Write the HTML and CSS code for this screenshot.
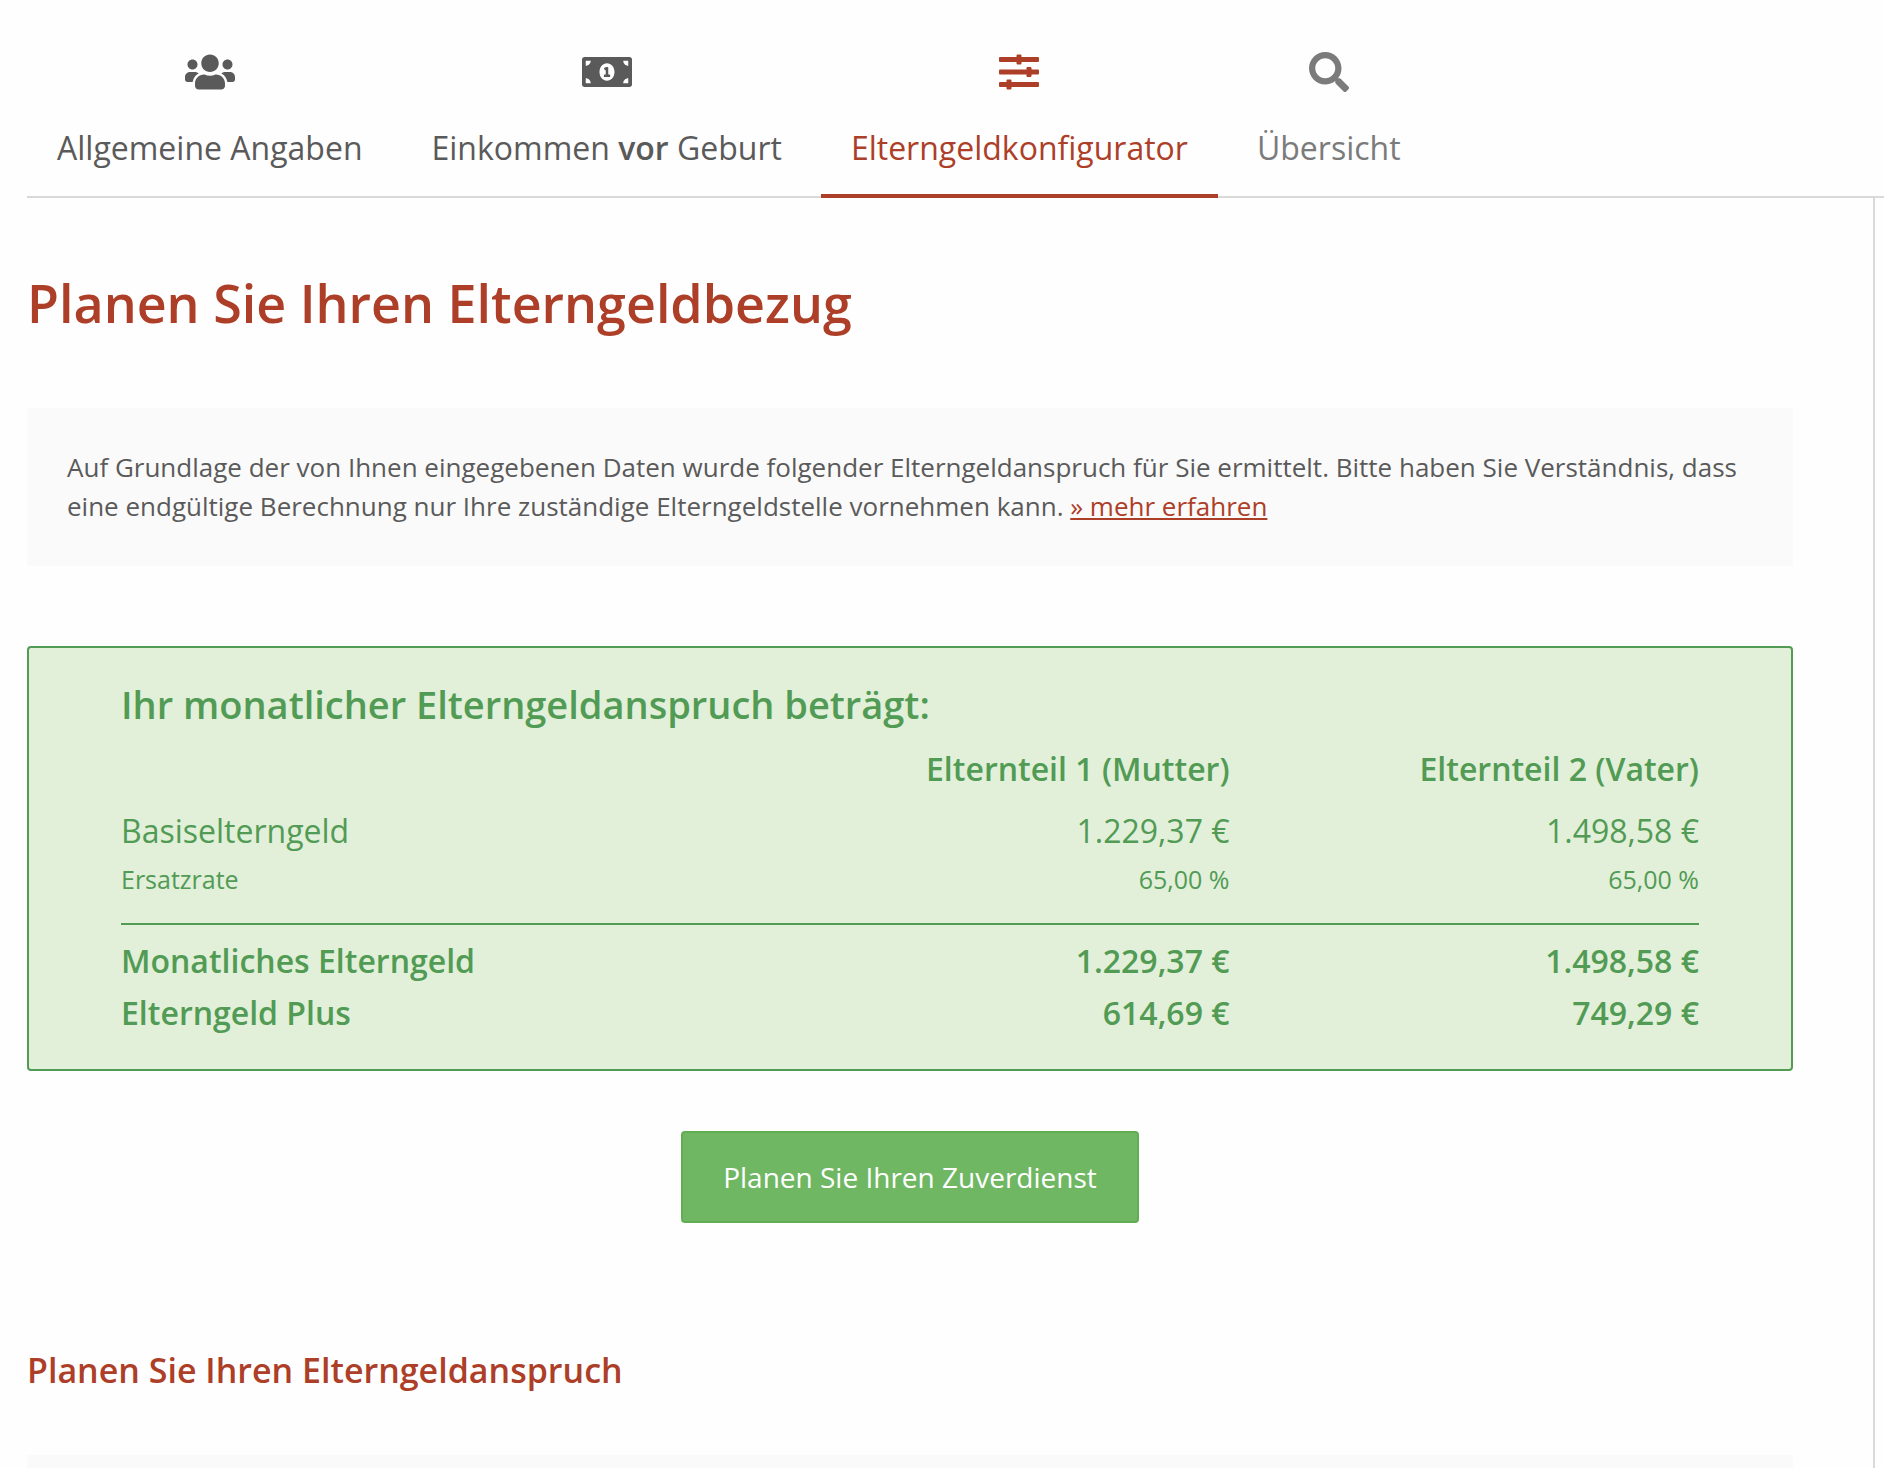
FILE: index.html
```html
<!DOCTYPE html>
<html lang="de">
<head>
<meta charset="utf-8">
<meta name="viewport" content="width=device-width, initial-scale=1">
<title>Elterngeldkonfigurator</title>
<link rel="stylesheet" href="styles.css">
</head>
<body>
<nav class="tabs" aria-label="Schritte">
  <a class="tab" href="#angaben">
    <svg class="icon" viewBox="0 0 640 512" aria-hidden="true"><path d="M96 224c35.300 0 64-28.700 64-64s-28.700-64-64-64-64 28.700-64 64 28.700 64 64 64zm448 0c35.300 0 64-28.700 64-64s-28.700-64-64-64-64 28.700-64 64 28.700 64 64 64zm32 32h-64c-17.600 0-33.500 7.100-45.100 18.600 40.300 22.100 68.900 62 75.100 109.400h66c17.700 0 32-14.300 32-32v-32c0-35.300-28.700-64-64-64zm-256 0c61.900 0 112-50.100 112-112S381.900 32 320 32 208 82.100 208 144s50.100 112 112 112zm76.800 32h-8.300c-20.800 10-43.900 16-68.500 16s-47.600-6-68.500-16h-8.300C179.600 288 128 339.600 128 403.200V432c0 26.500 21.500 48 48 48h288c26.500 0 48-21.500 48-48v-28.800c0-63.600-51.600-115.200-115.200-115.200zm-223.700-13.400C161.500 263.100 145.600 256 128 256H64c-35.300 0-64 28.700-64 64v32c0 17.700 14.300 32 32 32h65.900c6.300-47.400 34.900-87.300 75.200-109.400z"/></svg>
    <span>Allgemeine Angaben</span>
  </a>
  <a class="tab" href="#einkommen">
    <svg class="icon" viewBox="0 0 640 512" aria-hidden="true"><path fill-rule="evenodd" d="M608 64H32C14.330 64 0 78.330 0 96v320c0 17.670 14.330 32 32 32h576c17.670 0 32-14.330 32-32V96c0-17.670-14.330-32-32-32zM48 400v-64c35.350 0 64 28.650 64 64H48zm0-224v-64h64c0 35.350-28.650 64-64 64zm272 192c-53.020 0-96-50.150-96-112 0-61.860 42.980-112 96-112s96 50.140 96 112c0 61.870-43 112-96 112zm272 32h-64c0-35.350 28.650-64 64-64v64zm0-224c-35.350 0-64-28.650-64-64h64v64z"/><path d="M352 288h-16v-88c0-4.420-3.580-8-8-8h-13.580c-4.740 0-9.370 1.400-13.310 4.030l-15.330 10.220a7.994 7.994 0 0 0-2.220 11.090l8.880 13.310a7.994 7.994 0 0 0 11.090 2.220l.47-.31V288h-16c-4.420 0-8 3.580-8 8v16c0 4.420 3.580 8 8 8h64c4.420 0 8-3.580 8-8v-16c0-4.420-3.580-8-8-8z"/></svg>
    <span>Einkommen <strong>vor</strong> Geburt</span>
  </a>
  <a class="tab tab-active" href="#konfigurator" aria-current="step">
    <svg class="icon" viewBox="0 0 512 512" aria-hidden="true"><path d="M496 384H160v-16c0-8.800-7.200-16-16-16h-32c-8.800 0-16 7.200-16 16v16H16c-8.800 0-16 7.200-16 16v32c0 8.800 7.200 16 16 16h80v16c0 8.800 7.200 16 16 16h32c8.800 0 16-7.200 16-16v-16h336c8.800 0 16-7.200 16-16v-32c0-8.800-7.200-16-16-16zm0-160h-80v-16c0-8.800-7.200-16-16-16h-32c-8.800 0-16 7.200-16 16v16H16c-8.800 0-16 7.200-16 16v32c0 8.800 7.200 16 16 16h336v16c0 8.800 7.200 16 16 16h32c8.800 0 16-7.200 16-16v-16h80c8.800 0 16-7.200 16-16v-32c0-8.800-7.200-16-16-16zm0-160H288V48c0-8.800-7.200-16-16-16h-32c-8.800 0-16 7.200-16 16v16H16C7.200 64 0 71.200 0 80v32c0 8.800 7.200 16 16 16h208v16c0 8.800 7.200 16 16 16h32c8.800 0 16-7.200 16-16v-16h208c8.800 0 16-7.200 16-16V80c0-8.800-7.200-16-16-16z"/></svg>
    <span>Elterngeldkonfigurator</span>
  </a>
  <a class="tab tab-pending" href="#uebersicht">
    <svg class="icon" viewBox="0 0 512 512" aria-hidden="true"><path d="M505 442.700L405.300 343c-4.500-4.500-10.600-7-17-7H372c27.600-35.300 44-79.700 44-128C416 93.100 322.900 0 208 0S0 93.100 0 208s93.100 208 208 208c48.300 0 92.700-16.400 128-44v16.300c0 6.400 2.500 12.500 7 17l99.700 99.700c9.400 9.400 24.600 9.400 33.900 0l28.300-28.300c9.400-9.400 9.400-24.600.1-34zM208 336c-70.700 0-128-57.200-128-128 0-70.700 57.200-128 128-128 70.700 0 128 57.200 128 128 0 70.700-57.200 128-128 128z"/></svg>
    <span>Übersicht</span>
  </a>
</nav>
<main class="content">
  <h1 class="page-title">Planen Sie Ihren Elterngeldbezug</h1>
  <p class="note">Auf Grundlage der von Ihnen eingegebenen Daten wurde folgender Elterngeldanspruch für Sie ermittelt. Bitte haben Sie Verständnis, dass eine endgültige Berechnung nur Ihre zuständige Elterngeldstelle vornehmen kann. <a href="#mehr">» mehr erfahren</a></p>
  <section class="result">
    <h2 class="result-title" id="result-title">Ihr monatlicher Elterngeldanspruch beträgt:</h2>
    <table class="amounts" aria-labelledby="result-title">
      <thead>
        <tr><td></td><th scope="col">Elternteil 1 (Mutter)</th><th scope="col">Elternteil 2 (Vater)</th></tr>
      </thead>
      <tbody>
        <tr class="base"><th scope="row">Basiselterngeld</th><td>1.229,37 €</td><td>1.498,58 €</td></tr>
        <tr class="rate"><th scope="row">Ersatzrate</th><td>65,00 %</td><td>65,00 %</td></tr>
      </tbody>
      <tbody class="totals">
        <tr class="monthly"><th scope="row">Monatliches Elterngeld</th><td>1.229,37 €</td><td>1.498,58 €</td></tr>
        <tr class="plus"><th scope="row">Elterngeld Plus</th><td>614,69 €</td><td>749,29 €</td></tr>
      </tbody>
    </table>
  </section>
  <button class="button" type="button">Planen Sie Ihren Zuverdienst</button>
  <h2 class="section-title">Planen Sie Ihren Elterngeldanspruch</h2>
  <div class="panel"></div>
</main>
</body>
</html>
```
FILE: styles.css
```css
* {
  box-sizing: border-box;
}

body {
  display: flex;
  flex-direction: column;
  min-height: 100vh;
  margin: 0;
  background: #fefefe;
  color: #5a5a5a;
  font-family: "Open Sans", sans-serif;
  font-size: 26px;
  line-height: 39px;
}

h1,
h2,
p {
  margin: 0;
}

.tabs {
  display: flex;
  gap: 9px;
  margin-left: 27px;
  padding-top: 52px;
  border-bottom: 2px solid #d9d9d9;
}

.tab {
  display: flex;
  flex-direction: column;
  align-items: center;
  gap: 32px;
  margin-bottom: -2px;
  padding: 0 30px 22px;
  border-bottom: 4px solid transparent;
  color: inherit;
  font-size: 32px;
  line-height: 48px;
  text-decoration: none;
}

.tab strong {
  font-weight: 600;
}

.tab-active {
  border-color: #ad3e28;
  color: #ad3e28;
}

.tab-pending {
  color: #7b7b7b;
}

.icon {
  height: 40px;
  fill: currentColor;
}

.content {
  display: flex;
  flex: 1;
  flex-direction: column;
  margin: 0 9px 0 27px;
  padding: 66px 80px 0 0;
  border-right: 2px solid #d9d9d9;
}

.page-title {
  margin-bottom: 66px;
  color: #ad3e28;
  font-size: 52px;
  font-weight: 600;
  line-height: 78px;
}

.note {
  padding: 40px;
  background: #fafafa;
}

.note a {
  color: #ad3e28;
}

.result {
  margin: 80px 0 60px;
  padding: 26px 92px 32px;
  border: 2px solid #519b55;
  border-radius: 4px;
  background: #e2efd9;
  color: #519b55;
}

.result-title {
  font-size: 38px;
  font-weight: 600;
  line-height: 60px;
}

.amounts {
  width: 100%;
  border-collapse: separate;
  border-spacing: 0;
  table-layout: fixed;
  font-size: 32px;
  line-height: 48px;
}

.amounts th,
.amounts td {
  padding: 0;
  font-weight: inherit;
  text-align: right;
}

.amounts tr > :first-child {
  width: 40.5%;
  text-align: left;
}

.amounts thead th {
  padding-top: 11px;
  font-weight: 600;
}

.base > * {
  border-top: 14px solid transparent;
}

.rate > * {
  border-top: 5px solid transparent;
  border-bottom: 24px solid transparent;
  font-size: 25px;
  line-height: 39px;
}

.totals {
  font-weight: 600;
}

.amounts .monthly > * {
  padding-top: 12px;
  border-top: 2px solid #519b55;
}

.amounts .plus > * {
  padding-top: 4px;
}

.button {
  align-self: center;
  padding: 23px 40px;
  border: 2px solid #62ac54;
  border-radius: 4px;
  background: #6fb763;
  color: #fff;
  font: inherit;
  font-size: 28px;
  line-height: 42px;
}

.section-title {
  margin: 122px 0 59px;
  color: #ad3e28;
  font-size: 34px;
  font-weight: 600;
  line-height: 51px;
}

.panel {
  flex: 1;
  background: #fafafa;
}
```
